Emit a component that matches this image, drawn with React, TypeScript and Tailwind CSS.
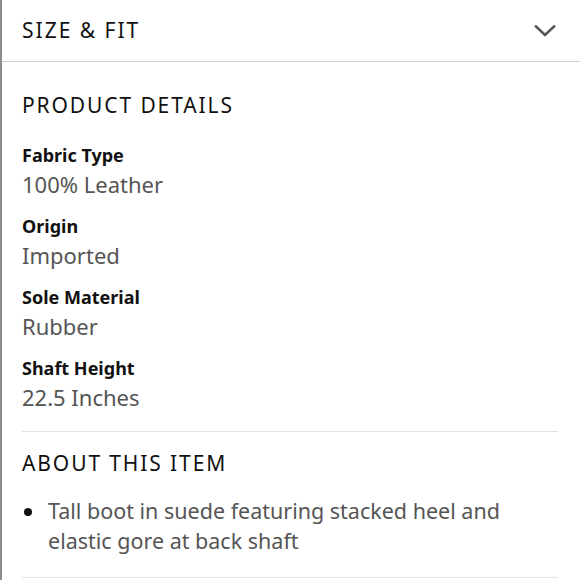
import React from "react";

const details = [
  { label: "Fabric Type", value: "100% Leather" },
  { label: "Origin", value: "Imported" },
  { label: "Sole Material", value: "Rubber" },
  { label: "Shaft Height", value: "22.5 Inches" },
];

export default function App() {
  return (
    <div
      className="w-[580px] h-[580px] overflow-hidden bg-white border-l-2 border-[#8c8c8c]"
      style={{ fontFamily: '"Noto Sans", "Open Sans", Arial, sans-serif' }}
    >
      <div className="h-[62px] flex items-center justify-between pl-5 pr-[24px] border-b border-[#cfcfcf]">
        <span className="text-[21px] tracking-[0.095em] text-[#111] leading-none">SIZE &amp; FIT</span>
        <svg width="22" height="14" viewBox="0 0 22 14" fill="none">
          <path d="M2 2.5 L11 11 L20 2.5" stroke="#555" strokeWidth="2.6" strokeLinecap="square" />
        </svg>
      </div>
      <div className="pl-5 pr-[22px]">
        <div className="pt-[29px] pb-[20px] border-b border-[#e3e3e3]">
          <div className="text-[21px] tracking-[0.09em] text-[#111] leading-[28px] mb-[23px]">PRODUCT DETAILS</div>
          <div className="flex flex-col gap-[15px]">
            {details.map((d) => (
              <div key={d.label} className="flex flex-col">
                <span className="text-[18px] font-bold text-[#111] leading-[26px]">{d.label}</span>
                <span className="text-[22px] text-[#555] leading-[28px] mt-[2px]">{d.value}</span>
              </div>
            ))}
          </div>
        </div>
        <div className="pt-[17px] pb-[21px] border-b border-[#e3e3e3]">
          <div className="text-[21px] tracking-[0.09em] text-[#111] leading-[28px] mb-[19px]">ABOUT THIS ITEM</div>
          <div className="flex items-start">
            <span className="w-[8px] h-[8px] rounded-full bg-[#111] mt-[12px] ml-[2px] mr-[16px] shrink-0" />
            <p className="text-[21.5px] text-[#555] leading-[30px]">
              Tall boot in suede featuring stacked heel and elastic gore at back shaft
            </p>
          </div>
        </div>
      </div>
    </div>
  );
}
